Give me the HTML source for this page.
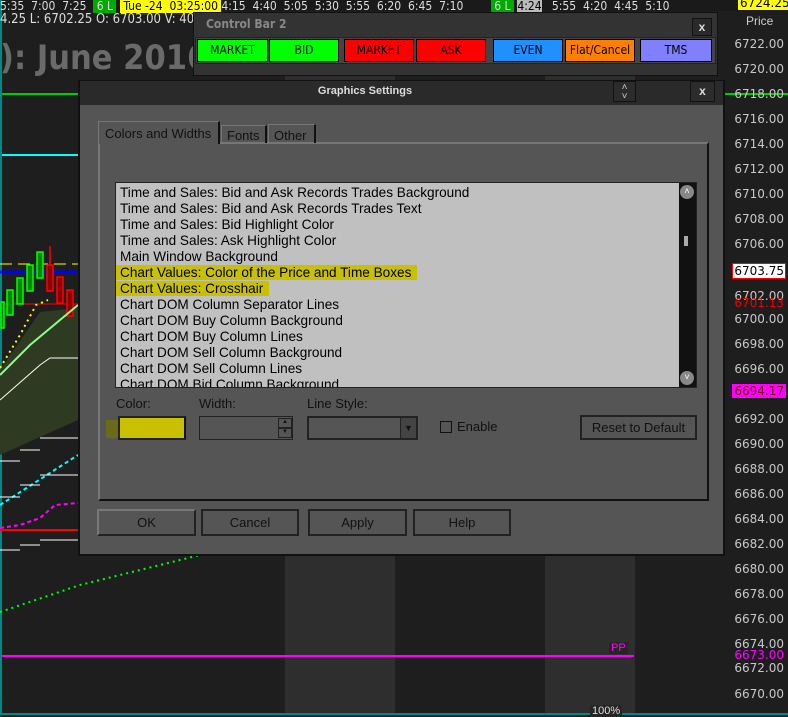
<!DOCTYPE html>
<html><head><style>
*{margin:0;padding:0;box-sizing:border-box}
body{width:788px;height:715px;background:#1e1e1e;position:relative;overflow:hidden;font-family:"Liberation Sans",sans-serif}
.a{position:absolute}
.px{position:absolute;right:4px;font-family:"DejaVu Sans",sans-serif;font-size:12px;color:#c8c8c8}
.btn{position:absolute;top:39px;height:23px;font-size:12px;text-align:center;line-height:21px;border:1px solid #000;font-family:"DejaVu Sans Condensed","DejaVu Sans",sans-serif;color:#000}
.li{height:16px;line-height:16px;font-size:13.6px;color:#000;padding-left:4px;white-space:nowrap}
.db{position:absolute;height:27px;border:2px solid #222;background:#555;font-size:13px;text-align:center;line-height:23px;color:#111}
</style></head><body>
<svg class="a" style="left:0;top:0" width="788" height="715">
<rect x="285" y="75" width="110" height="640" fill="#2e2e2e"/>
<rect x="545" y="75" width="90" height="640" fill="#2e2e2e"/>
<rect x="0" y="0" width="788" height="11" fill="#1a1a1a"/>
<line x1="0" y1="94" x2="788" y2="94" stroke="#0c0" stroke-width="2"/>
<line x1="0" y1="155" x2="80" y2="155" stroke="#0ff" stroke-width="2"/>
<line x1="0" y1="656" x2="634" y2="656" stroke="#f0f" stroke-width="2"/>
<line x1="1" y1="0" x2="1" y2="715" stroke="#088" stroke-width="2"/>
<line x1="0" y1="714" x2="788" y2="714" stroke="#088" stroke-width="2"/>
<polygon points="0,455 0,370 40,312 78,308 78,420" fill="#2f3a22"/>
<line x1="0" y1="272" x2="78" y2="272" stroke="#00f" stroke-width="3"/>
<line x1="0" y1="264" x2="78" y2="264" stroke="#ff0" stroke-width="1" stroke-dasharray="12 6"/>
<line x1="0" y1="304" x2="78" y2="304" stroke="#f00" stroke-width="1"/>
<g stroke-width="1.5"><rect x="1" y="302" width="3" height="26" fill="#080" stroke="#0f0"/><rect x="7" y="290" width="6" height="25" fill="#080" stroke="#0f0"/><rect x="17" y="278" width="6" height="26" fill="#080" stroke="#0f0"/><rect x="27" y="265" width="6" height="26" fill="#080" stroke="#0f0"/><rect x="37" y="252" width="6" height="26" fill="#080" stroke="#0f0"/><rect x="47" y="265" width="6" height="26" fill="#800" stroke="#f00"/><line x1="50" y1="246" x2="50" y2="265" stroke="#f00"/><rect x="57" y="277" width="6" height="26" fill="#800" stroke="#f00"/><rect x="67" y="290" width="6" height="26" fill="#800" stroke="#f00"/></g>
<polyline points="0,375 30,345 78,305" stroke="#8f8" stroke-width="2" fill="none"/>
<polyline points="0,400 40,365 50,358 78,358" stroke="#fff" stroke-width="1" fill="none"/>
<polyline points="0,368 20,335 36,305 48,300" stroke="#ff0" stroke-width="2" stroke-dasharray="2 4" fill="none"/>
<polyline points="0,505 78,455" stroke="#0ff" stroke-width="2" stroke-dasharray="4 3" fill="none"/>
<polyline points="0,528 20,525 40,518 55,505 78,503" stroke="#f0f" stroke-width="2" stroke-dasharray="4 3" fill="none"/>
<line x1="0" y1="530" x2="78" y2="530" stroke="#f00" stroke-width="2"/>
<polyline points="0,612 80,585 200,555" stroke="#0f0" stroke-width="2" stroke-dasharray="2 4" fill="none"/>
<g stroke="#fff" stroke-width="1"><line x1="0" y1="461" x2="20" y2="461"/><line x1="20" y1="450" x2="40" y2="450"/><line x1="40" y1="438" x2="78" y2="438"/><line x1="0" y1="497" x2="20" y2="497"/><line x1="20" y1="485" x2="40" y2="485"/><line x1="40" y1="475" x2="78" y2="475"/><line x1="0" y1="550" x2="20" y2="550"/><line x1="20" y1="545" x2="40" y2="545"/><line x1="40" y1="540" x2="78" y2="540"/></g>
</svg>
<div class="a" style="left:0;top:-1px;font-size:12px;color:#ddd;font-family:'DejaVu Sans Condensed',sans-serif;white-space:pre;width:788px">5:35  7:00  7:25  <span style="background:#0a0;color:#ddd"> 6 L </span> <span style="background:#ff0;color:#000"> Tue -24  03:25:00 </span>4:15  4:40  5:05  5:30  5:55  6:20  6:45  7:10        <span style="background:#0a0"> 6 L </span> <span style="background:#bbb;color:#000">4:24</span>   5:55  4:20  4:45  5:10</div>
<div class="a" style="left:0;top:12px;font-size:13px;color:#ddd;font-family:'DejaVu Sans Condensed',sans-serif">4.25 L: 6702.25 O: 6703.00 V: 40</div>
<div class="a" style="left:0;top:38px;font-size:34px;font-weight:bold;color:#6a6a6a;font-family:'DejaVu Sans Condensed',sans-serif">): June 2016</div>
<div class="a" style="left:738px;top:-4px;background:#ff0;color:#000;font-size:12px;font-family:'DejaVu Sans',sans-serif;padding:0 2px">6724.25</div>
<div class="a" style="left:746px;top:14px;color:#ccc;font-size:12px">Price</div>
<div class="px" style="top:37px">6722.00</div><div class="px" style="top:62px">6720.00</div><div class="px" style="top:87px">6718.00</div><div class="px" style="top:112px">6716.00</div><div class="px" style="top:137px">6714.00</div><div class="px" style="top:162px">6712.00</div><div class="px" style="top:187px">6710.00</div><div class="px" style="top:212px">6708.00</div><div class="px" style="top:237px">6706.00</div>
<div class="px" style="top:263px;background:#fff;color:#000;border:1px solid #f00;right:2px;padding:0 1px">6703.75</div>
<div class="px" style="top:289px">6702.00</div><div class="px" style="top:296px;color:#e00">6701.13</div><div class="px" style="top:312px">6700.00</div><div class="px" style="top:337px">6698.00</div><div class="px" style="top:362px">6696.00</div>
<div class="px" style="top:384px;background:#f0f;color:#600;right:2px;padding:0 2px">6694.17</div>
<div class="px" style="top:412px">6692.00</div><div class="px" style="top:437px">6690.00</div><div class="px" style="top:462px">6688.00</div><div class="px" style="top:487px">6686.00</div><div class="px" style="top:512px">6684.00</div><div class="px" style="top:537px">6682.00</div><div class="px" style="top:562px">6680.00</div><div class="px" style="top:587px">6678.00</div><div class="px" style="top:612px">6676.00</div><div class="px" style="top:637px">6674.00</div><div class="px" style="top:648px;color:#f0f">6673.00</div><div class="px" style="top:661px">6672.00</div><div class="px" style="top:687px">6670.00</div>
<div class="a" style="left:609px;top:642px;background:#252525;color:#f0f;font-size:11px;padding:0 2px">PP</div>
<div class="a" style="left:590px;top:705px;background:#252525;color:#ddd;font-size:11px;padding:0 2px">100%</div>

<div class="a" style="left:193px;top:12px;width:525px;height:64px;background:#333;border:1px solid #111"></div>
<div class="a" style="left:206px;top:17px;color:#888;font-size:12px;font-weight:bold;font-family:'DejaVu Sans Condensed',sans-serif">Control Bar 2</div>
<div class="a" style="left:692px;top:18px;width:20px;height:18px;background:#2a2a2a;border:1px solid #111;color:#ddd;font-size:12px;font-weight:bold;text-align:center;line-height:16px">x</div>
<div class="a" style="left:195px;top:37px;width:521px;height:27px;background:#444;border:1px solid #222"></div>
<div class="btn" style="left:197px;width:71px;background:#0f0">MARKET</div>
<div class="btn" style="left:269px;width:70px;background:#0f0">BID</div>
<div class="btn" style="left:344px;width:70px;background:#f00">MARKET</div>
<div class="btn" style="left:416px;width:70px;background:#f00">ASK</div>
<div class="btn" style="left:493px;width:70px;background:#1e90ff">EVEN</div>
<div class="btn" style="left:565px;width:70px;background:#ff8000">Flat/Cancel</div>
<div class="btn" style="left:640px;width:72px;background:#8080ff">TMS</div>

<div class="a" style="left:78px;top:80px;width:647px;height:476px;background:#555;border:2px solid #111"></div>
<div class="a" style="left:80px;top:81px;width:643px;height:24px;background:#2a2a2a"></div>
<div class="a" style="left:80px;top:83px;width:570px;text-align:center;color:#ddd;font-size:11px;font-weight:bold;line-height:16px">Graphics Settings</div>
<div class="a" style="left:613px;top:81px;width:23px;height:21px;background:#2c2c2c;border:1px solid #111;color:#ccc;font-size:10px;text-align:center;line-height:9px;padding-top:1px">&#x2C4;<br>&#x2C5;</div>
<div class="a" style="left:690px;top:81px;width:25px;height:21px;background:#2c2c2c;border:1px solid #111;color:#ddd;font-size:12px;font-weight:bold;text-align:center;line-height:19px">x</div>
<div class="a" style="left:98px;top:142px;width:611px;height:359px;border:2px solid #111;border-left-color:#777;border-top-color:#777"></div>
<div class="a" style="left:98px;top:121px;width:122px;height:23px;background:#555;border:1px solid #777;border-bottom:none;border-right:2px solid #111;font-size:13px;color:#111;padding:4px 0 0 6px">Colors and Widths</div>
<div class="a" style="left:221px;top:125px;width:46px;height:18px;border:1px solid #777;border-right:2px solid #111;border-bottom:none;font-size:13px;color:#111;padding:2px 0 0 5px">Fonts</div>
<div class="a" style="left:268px;top:124px;width:48px;height:19px;border:1px solid #777;border-right:2px solid #111;border-bottom:none;font-size:13px;color:#111;padding:3px 0 0 5px">Other</div>
<div class="a" style="left:115px;top:182px;width:582px;height:206px;background:#c0c0c0;border:1px solid #222;overflow:hidden;padding-top:2px">
<div class="li">Time and Sales: Bid and Ask Records Trades Background</div>
<div class="li">Time and Sales: Bid and Ask Records Trades Text</div>
<div class="li">Time and Sales: Bid Highlight Color</div>
<div class="li">Time and Sales: Ask Highlight Color</div>
<div class="li">Main Window Background</div>
<div class="li"><span style="background:#c8c000;padding-right:6px;margin-left:-4px;padding-left:4px">Chart Values: Color of the Price and Time Boxes</span></div>
<div class="li"><span style="background:#c8c000;padding-right:6px;margin-left:-4px;padding-left:4px">Chart Values: Crosshair</span></div>
<div class="li">Chart DOM Column Separator Lines</div>
<div class="li">Chart DOM Buy Column Background</div>
<div class="li">Chart DOM Buy Column Lines</div>
<div class="li">Chart DOM Sell Column Background</div>
<div class="li">Chart DOM Sell Column Lines</div>
<div class="li">Chart DOM Bid Column Background</div>
</div>
<div class="a" style="left:679px;top:183px;width:17px;height:204px;background:#111"></div>
<div class="a" style="left:680px;top:185px;width:14px;height:14px;border-radius:7px;background:#888;color:#fff;font-size:9px;text-align:center;line-height:12px">&#x2C4;</div>
<div class="a" style="left:680px;top:371px;width:14px;height:14px;border-radius:7px;background:#888;color:#fff;font-size:9px;text-align:center;line-height:12px">&#x2C5;</div>
<div class="a" style="left:684px;top:236px;width:4px;height:10px;background:#aaa"></div>
<div class="a" style="left:116px;top:396px;font-size:13px;color:#111">Color:</div>
<div class="a" style="left:199px;top:396px;font-size:13px;color:#111">Width:</div>
<div class="a" style="left:307px;top:396px;font-size:13px;color:#111">Line Style:</div>
<div class="a" style="left:106px;top:420px;width:80px;height:18px;background:#6a6a1a"></div>
<div class="a" style="left:118px;top:416px;width:68px;height:24px;background:#c8c000;border:2px solid #222;border-right-color:#111"></div>
<div class="a" style="left:199px;top:416px;width:94px;height:24px;border:1px solid #222;background:#555"></div>
<div class="a" style="left:278px;top:418px;width:14px;height:10px;border:1px solid #222;font-size:6px;text-align:center;color:#111">▲</div>
<div class="a" style="left:278px;top:428px;width:14px;height:10px;border:1px solid #222;font-size:6px;text-align:center;color:#111">▼</div>
<div class="a" style="left:307px;top:416px;width:111px;height:24px;border:2px solid #222"></div>
<div class="a" style="left:400px;top:418px;width:16px;height:20px;background:#444;border-left:1px solid #222;color:#111;font-size:9px;text-align:center;line-height:20px">▼</div>
<div class="a" style="left:440px;top:421px;width:12px;height:12px;border:1px solid #111"></div>
<div class="a" style="left:457px;top:419px;font-size:13px;color:#111">Enable</div>
<div class="db" style="left:580px;top:415px;width:117px;height:25px;line-height:21px">Reset to Default</div>
<div class="db" style="left:97px;top:509px;width:99px;border-color:#777 #222 #222 #777">OK</div>
<div class="db" style="left:201px;top:509px;width:98px">Cancel</div>
<div class="db" style="left:308px;top:509px;width:99px">Apply</div>
<div class="db" style="left:413px;top:509px;width:98px">Help</div>
</body></html>
